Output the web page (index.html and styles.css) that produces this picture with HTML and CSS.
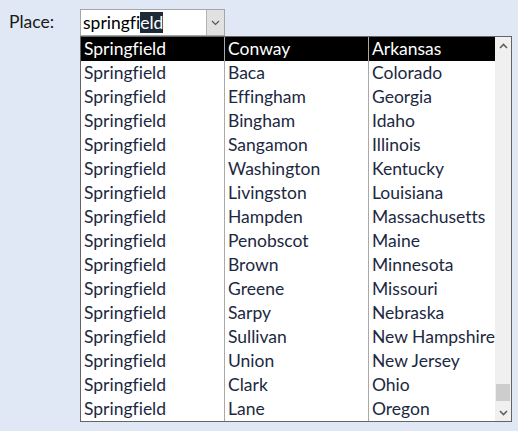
FILE: index.html
```html
<!DOCTYPE html>
<html lang="en">
<head>
  <meta charset="UTF-8">
  <title>Place lookup</title>
  <link rel="stylesheet" href="styles.css">
</head>
<body>
  <div class="field">
    <label class="label">Place:</label>
    <div class="picker">
      <div class="combo">
        <span class="combo-text">springfi<span class="sel">eld</span></span>
        <span class="combo-btn">
          <svg width="9" height="6" viewBox="0 0 9 6"><path d="M1 1 L4.5 4.5 L8 1" fill="none" stroke="#555" stroke-width="1.2"/></svg>
        </span>
      </div>
      <div class="list">
        <div class="rows">
          <div class="row active"><span>Springfield</span><span>Conway</span><span>Arkansas</span></div>
          <div class="row"><span>Springfield</span><span>Baca</span><span>Colorado</span></div>
          <div class="row"><span>Springfield</span><span>Effingham</span><span>Georgia</span></div>
          <div class="row"><span>Springfield</span><span>Bingham</span><span>Idaho</span></div>
          <div class="row"><span>Springfield</span><span>Sangamon</span><span>Illinois</span></div>
          <div class="row"><span>Springfield</span><span>Washington</span><span>Kentucky</span></div>
          <div class="row"><span>Springfield</span><span>Livingston</span><span>Louisiana</span></div>
          <div class="row"><span>Springfield</span><span>Hampden</span><span>Massachusetts</span></div>
          <div class="row"><span>Springfield</span><span>Penobscot</span><span>Maine</span></div>
          <div class="row"><span>Springfield</span><span>Brown</span><span>Minnesota</span></div>
          <div class="row"><span>Springfield</span><span>Greene</span><span>Missouri</span></div>
          <div class="row"><span>Springfield</span><span>Sarpy</span><span>Nebraska</span></div>
          <div class="row"><span>Springfield</span><span>Sullivan</span><span>New Hampshire</span></div>
          <div class="row"><span>Springfield</span><span>Union</span><span>New Jersey</span></div>
          <div class="row"><span>Springfield</span><span>Clark</span><span>Ohio</span></div>
          <div class="row"><span>Springfield</span><span>Lane</span><span>Oregon</span></div>
        </div>
        <div class="scrollbar">
          <div class="arrow">
            <svg width="9" height="6" viewBox="0 0 9 6"><path d="M1 5 L4.5 1.5 L8 5" fill="none" stroke="#606060" stroke-width="1.6"/></svg>
          </div>
          <div class="track"><div class="thumb"></div></div>
          <div class="arrow">
            <svg width="9" height="6" viewBox="0 0 9 6"><path d="M1 1 L4.5 4.5 L8 1" fill="none" stroke="#606060" stroke-width="1.6"/></svg>
          </div>
        </div>
      </div>
    </div>
  </div>
</body>
</html>
```
FILE: styles.css
```css
body { margin: 0; background: #dfe8f4; font-family: Lato, "Liberation Sans", sans-serif; font-size: 17.5px; font-variant-ligatures: none; color: #1c2841; }
.field { display: flex; padding: 9px 0 0 9px; }
.label { width: 71px; line-height: 26px; color: #1a1a1a; }
.picker { display: flex; flex-direction: column; }

.combo { display: flex; width: 145px; height: 27px; box-sizing: border-box; border: 1px solid #a6a6a6; background: #fff; }
.combo-text { flex: 1; padding-left: 2px; line-height: 25px; color: #000; }
.combo-text .sel { background: #1e2a38; color: #fff; }
.combo-btn { display: flex; align-items: center; justify-content: center; width: 17px; background: #e1e1e1; border-left: 1px solid #b4b4b4; }

.list { display: flex; width: 432px; height: 386px; box-sizing: border-box; border: 1px solid #646464; background: #fff; }
.rows { flex: 1; overflow: hidden; }
.row { display: grid; grid-template-columns: 144px 144px 144px; height: 24px; line-height: 24px; white-space: nowrap; }
.row span { padding-left: 3px; border-right: 1px solid #a9a9a9; overflow: hidden; }
.row.active { background: #000; color: #fff; }

.scrollbar { width: 16px; display: flex; flex-direction: column; background: #f0f0f0; }
.arrow { height: 17px; display: flex; align-items: center; justify-content: center; }
.track { flex: 1; display: flex; flex-direction: column; justify-content: flex-end; padding: 0 1px 3px; }
.thumb { height: 17px; background: #cdcdcd; }
```
